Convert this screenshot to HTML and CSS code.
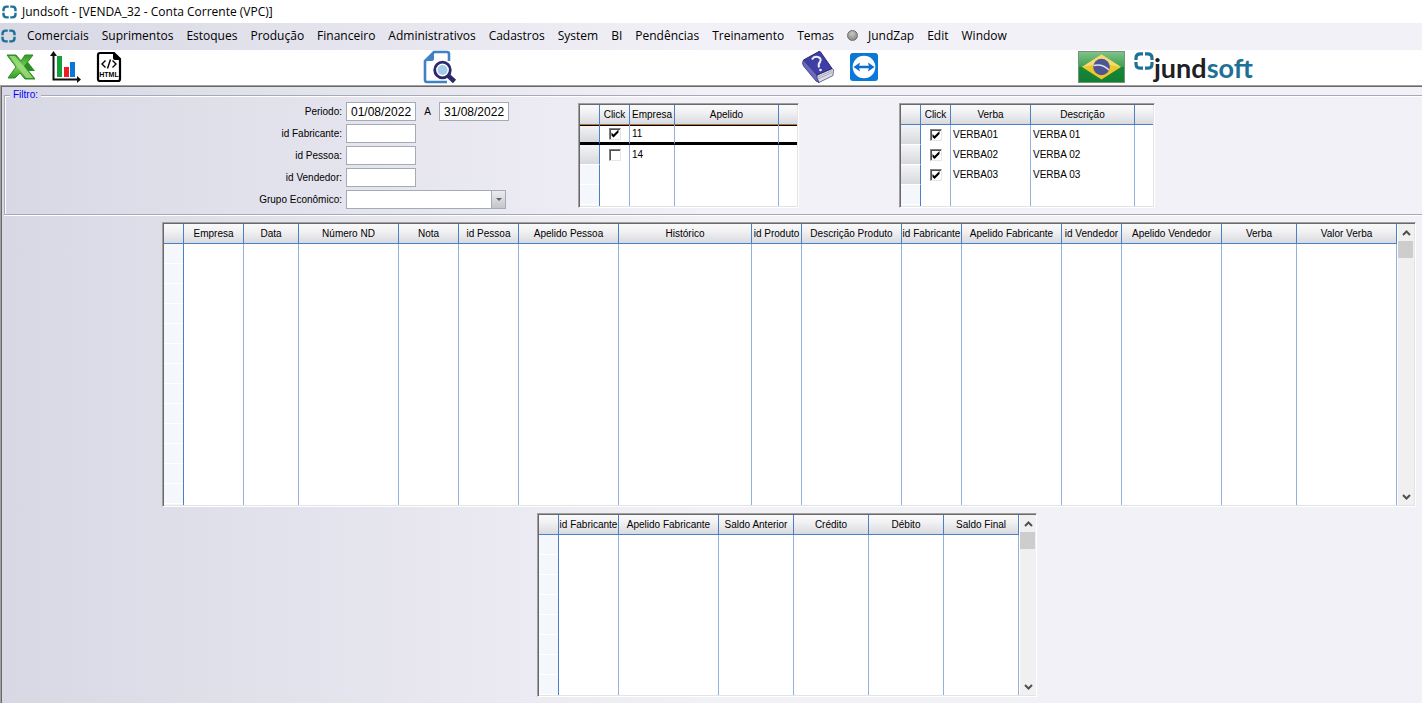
FILE: index.html
```html
<!DOCTYPE html>
<html lang="pt-BR">
<head>
<meta charset="utf-8">
<title>Jundsoft - [VENDA_32 - Conta Corrente (VPC)]</title>
<link rel="stylesheet" href="styles.css">
</head>
<body>
<svg class="defs" aria-hidden="true">
  <symbol id="mark" viewBox="0 0 20 18">
    <path d="M9 1.800H6.500C3.500 1.800 2 3.200 2 6v2M11 1.800h2.500C16.500 1.800 18 3.200 18 6v2M9 16.200H6.500C3.500 16.200 2 14.800 2 12v-2M11 16.200h2.500c3 0 4.500-1.400 4.500-4.200v-2" fill="none" stroke="#1d7196" stroke-width="3.200"/>
  </symbol>
</svg>

<header class="titlebar">
  <svg class="app-icon"><use href="#mark"/></svg>
  <h1 class="title">Jundsoft - [VENDA_32 - Conta Corrente (VPC)]</h1>
</header>

<nav class="menubar">
  <svg class="app-icon"><use href="#mark"/></svg>
  <button class="menu">Comerciais</button>
  <button class="menu">Suprimentos</button>
  <button class="menu">Estoques</button>
  <button class="menu">Produção</button>
  <button class="menu">Financeiro</button>
  <button class="menu">Administrativos</button>
  <button class="menu">Cadastros</button>
  <button class="menu">System</button>
  <button class="menu">BI</button>
  <button class="menu">Pendências</button>
  <button class="menu">Treinamento</button>
  <button class="menu">Temas</button>
  <button class="menu menu-zap"><span class="led"></span>JundZap</button>
  <button class="menu">Edit</button>
  <button class="menu">Window</button>
</nav>

<div class="toolbar">
  <div class="tools tools-export">
    <button class="tool" aria-label="Excel">
      <svg width="30" height="28" viewBox="0 0 30 28">
        <defs><linearGradient id="xg" x1="0" y1="0" x2="0" y2="1"><stop offset="0" stop-color="#2f9a26"/><stop offset=".5" stop-color="#78cf57"/><stop offset="1" stop-color="#2f9722"/></linearGradient></defs>
        <path d="M17 13l5-4 7 9h-9z" fill="#2c8f25"/>
        <path d="M1 2h9l5 6 4-6h8l-8.500 11L29 26H19l-5-6-5 5H2l8-11z" fill="url(#xg)" stroke="#2d8b22" stroke-width="1"/>
        <path d="M3 3h6l18 22h-7z" fill="#a5df82" opacity=".8"/>
      </svg>
    </button>
    <button class="tool" aria-label="Gráfico">
      <svg width="32" height="32" viewBox="0 0 32 32">
        <path d="M3.500 3v25.500H29" fill="none" stroke="#111" stroke-width="2"/>
        <path d="M0 5l3.500-5L7 5zM27 25l4 3.500-4 3.500z" fill="#111"/>
        <path d="M7 5h5v21H7z" fill="#12a038"/><path d="M14 16h5v10h-5z" fill="#ee1c24"/><path d="M20 11h5v15h-5z" fill="#0878d8"/>
      </svg>
    </button>
    <button class="tool" aria-label="HTML">
      <svg width="26" height="32" viewBox="0 0 26 32">
        <path d="M4 2h14l6 6v20q0 2-2 2H4q-2 0-2-2V4q0-2 2-2z" fill="#fff" stroke="#000" stroke-width="2.200"/>
        <path d="M17 1l8 8h-6q-2 0-2-2z"/>
        <path d="M9.500 9.500L6 13l3.500 3.500M16.500 9.500L20 13l-3.500 3.500M14.500 8.500l-3 9" fill="none" stroke="#000" stroke-width="1.400"/>
        <text x="13" y="26" class="html-tag" text-anchor="middle">HTML</text>
      </svg>
    </button>
  </div>
  <button class="tool tool-search" aria-label="Visualizar">
    <svg width="34" height="34" viewBox="0 0 34 34">
      <path d="M26 11V4q0-2-2-2H11L2 11v19q0 2 2 2h20" fill="none" stroke="#3f83c5" stroke-width="2.600"/>
      <path d="M11 1.500V9q0 2-2 2H1z" fill="#3f83c5"/>
      <circle cx="19.500" cy="20" r="7.800" fill="#fff" stroke="#29296b" stroke-width="2.800"/>
      <circle cx="19.500" cy="20" r="5" fill="#a6cbea"/>
      <path d="M25 25.500l6.500 6" stroke="#29296b" stroke-width="4.600"/>
    </svg>
  </button>
  <div class="tools tools-help">
    <button class="tool" aria-label="Ajuda">
      <svg width="34" height="34" viewBox="0 0 34 34">
        <path d="M15 25l15-6.500 1.500 1-.5 6L17 32.500l-3-2z" fill="#dddde8" stroke="#4b4b76" stroke-width=".8"/>
        <path d="M16 29l14-6.500M16 27l14-6.500" stroke="#9999ae" stroke-width=".8"/>
        <path d="M1.500 10L17 1.500q1-.5 1.500.5L30 18.500 15 25z" fill="#3e3ea5" stroke="#292975"/>
        <path d="M1.500 10q-2 3 0 6L14 31l3 1.500-2-4.500v-3z" fill="#6969bd" stroke="#33337e" stroke-width=".8"/>
        <path d="M10 9.500q2-3.800 6-2.500 4 1.500 2 5-2 2-1 5.500" fill="none" stroke="#eef" stroke-width="2"/>
        <circle cx="18.500" cy="20" r="1.300" fill="#eef"/>
      </svg>
    </button>
    <button class="tool" aria-label="TeamViewer">
      <svg width="28" height="28" viewBox="0 0 28 28">
        <rect width="28" height="28" rx="3" fill="#0b78d8"/>
        <circle cx="14" cy="14" r="11.300" fill="#fff"/>
        <path d="M3.500 14l6.500-4.500-.8 3.200h9.600L18 9.500l6.500 4.500-6.500 4.500.8-3.200H9.200l.8 3.200z" fill="#0b6fce"/>
      </svg>
    </button>
  </div>
  <div class="brand">
    <svg width="48" height="34" viewBox="0 0 48 34">
      <defs>
        <linearGradient id="fg" x1="0" y1="0" x2="0" y2="1"><stop offset="0" stop-color="#83c38b"/><stop offset=".5" stop-color="#3d9f50"/><stop offset=".5" stop-color="#17883a"/><stop offset="1" stop-color="#127d30"/></linearGradient>
      </defs>
      <rect x=".5" y="1.500" width="46" height="31" fill="url(#fg)" stroke="#77947b"/>
      <path d="M4 17L23.500 4.500 43 17 23.500 29.500z" fill="#edc72c"/>
      <path d="M4 17L23.500 4.500 43 17q-20-5-39 0z" fill="#f3dc73"/>
      <circle cx="23.500" cy="17" r="8.300" fill="#4f5594"/>
      <path d="M15.500 15.500q9-2 15.500 4.500" fill="none" stroke="#dce3ee" stroke-width="1.600"/>
    </svg>
    <div class="logo">
      <svg class="logo-mark"><use href="#mark"/></svg>
      <span class="logo-name">jund<span class="logo-soft">soft</span></span>
    </div>
  </div>
</div>

<main class="workspace">
  <fieldset class="filter">
    <legend class="filter-title">Filtro:</legend>
    <div class="filter-body">
      <form class="form">
        <label for="de">Periodo:</label>
        <div class="period">
          <input class="field" id="de" value="01/08/2022">
          <label for="ate">A</label>
          <input class="field" id="ate" value="31/08/2022">
        </div>
        <label for="fab">id Fabricante:</label><input class="field" id="fab">
        <label for="pes">id Pessoa:</label><input class="field" id="pes">
        <label for="ven">id Vendedor:</label><input class="field" id="ven">
        <label for="grp">Grupo Econômico:</label>
        <div class="combo">
          <select class="field field-combo" id="grp"><option></option></select>
          <span class="combo-arrow"></span>
        </div>
      </form>

      <div class="frame frame-small frame-empresa">
        <table class="grid">
          <colgroup><col class="w20"><col class="w30"><col class="w45"><col class="w104"><col></colgroup>
          <thead><tr><th></th><th>Click</th><th>Empresa</th><th>Apelido</th><th></th></tr></thead>
          <tbody>
            <tr class="current"><td class="handle"></td><td class="tick"><input type="checkbox" class="check" aria-label="Empresa 11" checked></td><td>11</td><td></td><td></td></tr>
            <tr><td class="handle"></td><td class="tick"><input type="checkbox" class="check" aria-label="Empresa 14"></td><td>14</td><td></td><td></td></tr>
            <tr class="rest"><td></td><td></td><td></td><td></td><td></td></tr>
          </tbody>
        </table>
      </div>

      <div class="frame frame-small frame-verba">
        <table class="grid">
          <colgroup><col class="w20"><col class="w30"><col class="w80"><col class="w104"><col></colgroup>
          <thead><tr><th></th><th>Click</th><th>Verba</th><th>Descrição</th><th></th></tr></thead>
          <tbody>
            <tr><td class="handle"></td><td class="tick"><input type="checkbox" class="check" aria-label="VERBA 01" checked></td><td>VERBA01</td><td>VERBA 01</td><td></td></tr>
            <tr><td class="handle"></td><td class="tick"><input type="checkbox" class="check" aria-label="VERBA 02" checked></td><td>VERBA02</td><td>VERBA 02</td><td></td></tr>
            <tr><td class="handle"></td><td class="tick"><input type="checkbox" class="check" aria-label="VERBA 03" checked></td><td>VERBA03</td><td>VERBA 03</td><td></td></tr>
            <tr class="rest"><td></td><td></td><td></td><td></td><td></td></tr>
          </tbody>
        </table>
      </div>
    </div>
  </fieldset>

  <section class="frame frame-entries">
    <table class="grid">
      <colgroup><col class="w20"><col class="w60"><col class="w55"><col class="w100"><col class="w60"><col class="w60"><col class="w100"><col><col class="w50"><col class="w100"><col class="w60"><col class="w100"><col class="w60"><col class="w100"><col class="w75"><col class="w100"></colgroup>
      <thead><tr><th></th><th>Empresa</th><th>Data</th><th>Número ND</th><th>Nota</th><th>id Pessoa</th><th>Apelido Pessoa</th><th>Histórico</th><th>id Produto</th><th>Descrição Produto</th><th>id Fabricante</th><th>Apelido Fabricante</th><th>id Vendedor</th><th>Apelido Vendedor</th><th>Verba</th><th>Valor Verba</th></tr></thead>
      <tbody><tr class="rest"><td></td><td></td><td></td><td></td><td></td><td></td><td></td><td></td><td></td><td></td><td></td><td></td><td></td><td></td><td></td><td></td></tr></tbody>
    </table>
    <div class="scroll">
      <button class="scroll-btn" aria-label="Subir"><svg width="9" height="6" viewBox="0 0 9 6"><path d="M1 5l3.500-3.500L8 5" fill="none" stroke="#505050" stroke-width="2"/></svg></button>
      <div class="thumb"></div>
      <button class="scroll-btn scroll-down" aria-label="Descer"><svg width="9" height="6" viewBox="0 0 9 6"><path d="M1 1l3.500 3.500L8 1" fill="none" stroke="#505050" stroke-width="2"/></svg></button>
    </div>
  </section>

  <section class="frame frame-totals">
    <table class="grid">
      <colgroup><col class="w20"><col class="w60"><col class="w100"><col class="w75"><col class="w75"><col class="w75"><col class="w75"></colgroup>
      <thead><tr><th></th><th>id Fabricante</th><th>Apelido Fabricante</th><th>Saldo Anterior</th><th>Crédito</th><th>Débito</th><th>Saldo Final</th></tr></thead>
      <tbody><tr class="rest"><td></td><td></td><td></td><td></td><td></td><td></td><td></td></tr></tbody>
    </table>
    <div class="scroll">
      <button class="scroll-btn" aria-label="Subir"><svg width="9" height="6" viewBox="0 0 9 6"><path d="M1 5l3.500-3.500L8 5" fill="none" stroke="#505050" stroke-width="2"/></svg></button>
      <div class="thumb"></div>
      <button class="scroll-btn scroll-down" aria-label="Descer"><svg width="9" height="6" viewBox="0 0 9 6"><path d="M1 1l3.500 3.500L8 1" fill="none" stroke="#505050" stroke-width="2"/></svg></button>
    </div>
  </section>
</main>
</body>
</html>
```
FILE: styles.css
```css
* { box-sizing: border-box; }

:root {
  --ui: "Open Sans", "Noto Sans", sans-serif;
  --small: "Liberation Sans", Arial, sans-serif;
  --chrome: linear-gradient(90deg, #d8d8e5 0, #f2f1f7 50%);
  --line: #4a80c8;
  --line-soft: #93b1da;
}

body {
  margin: 0;
  min-height: 100vh;
  display: flex;
  flex-direction: column;
  background: #fff;
  color: #000;
  font: 12px/16px var(--ui);
  overflow: hidden;
}

button { margin: 0; padding: 0; border: 0; background: none; font: inherit; color: inherit; }
svg { display: block; }
.defs { position: absolute; width: 0; height: 0; }

.titlebar { display: flex; align-items: center; gap: 5px; height: 23px; padding-left: 2px; }
.title { margin: 0; font-size: 12px; font-weight: 400; }
.app-icon { width: 15px; height: 14px; flex: none; }

.menubar { display: flex; align-items: center; height: 27px; padding-bottom: 2px; background: var(--chrome); }
.menubar .app-icon { margin: 0 11px 0 1px; }
.menu { margin-right: 13px; white-space: nowrap; }
.menu-zap { display: flex; align-items: center; gap: 10px; }
.led { width: 11px; height: 11px; border: 1px solid #6c6c6c; border-radius: 50%; background: radial-gradient(circle at 45% 30%, #c9c9c9, #777); }

.toolbar { display: flex; align-items: center; height: 35px; padding-bottom: 2px; }
.tools { display: flex; align-items: center; }
.tools-export { gap: 14px; padding-left: 6px; }
.tool-search { margin-left: 301px; }
.tools-help { gap: 14px; margin-left: 345px; }
.brand { display: flex; align-items: center; gap: 8px; margin-left: 200px; }
.html-tag { font: 700 7px "Liberation Sans", sans-serif; }
.logo { display: flex; align-items: flex-start; height: 30px; }
.logo-mark { width: 20px; height: 18px; }
.logo-name { font: 700 27px/32px Lato, sans-serif; color: #202024; }
.logo-soft { color: #1d7196; }

.workspace {
  flex: 1;
  border-top: 1px solid #a0a0a0;
  border-left: 1px solid #a0a0a0;
  box-shadow: inset 1px 1px 0 #696969;
  background: var(--chrome);
  padding: 3px 0 6px 3px;
  font: 10px/14px var(--small);
}

.filter {
  margin: 0;
  min-width: 0;
  padding: 0;
  border: 1px solid #a3acb6;
  border-right: 0;
  box-shadow: inset 1px 1px 0 #fff, 0 1px 0 #fff;
}
.filter-title { margin-left: 5px; padding: 0 3px; line-height: 12px; color: #00f; background: #d9d9e5; }
.filter-body { display: flex; align-items: flex-start; padding: 1px 0 5px; }

.form { display: grid; grid-template-columns: 337px auto; column-gap: 4px; row-gap: 3px; align-items: center; }
.form label { text-align: right; }
.period { display: flex; align-items: center; }
.form .period label { width: 23px; text-align: center; }
.field { display: block; width: 70px; height: 19px; margin: 0; padding: 0 4px; border: 1px solid #a3acb6; border-radius: 0; background: #fff; font: 12px/16px var(--small); color: #000; }
.combo { position: relative; width: 160px; }
.field-combo { width: 160px; appearance: none; }
.combo-arrow {
  position: absolute; top: 0; right: 0; width: 15px; height: 19px;
  border: 1px solid #a3acb6; background: linear-gradient(#ececef, #c3c5ca);
  pointer-events: none;
}
.combo-arrow::after { content: ""; position: absolute; left: 4px; top: 7px; border: 3px solid transparent; border-top-color: #5f6368; border-bottom: 0; }

.frame {
  display: flex;
  border: 1px solid;
  border-color: #a0a0a0 #fff #fff #a0a0a0;
  box-shadow: inset 1px 1px 0 #696969, inset -1px -1px 0 #e3e3e3;
  padding: 1px;
  background: #fff;
}
.frame-small { height: 105px; margin-top: 1px; }
.frame-empresa { width: 221px; margin-left: 69px; }
.frame-verba { width: 256px; margin-left: 100px; }
.frame-entries { height: 285px; margin: 7px 6px 0 158px; }
.frame-totals { width: 500px; height: 184px; margin: 6px 0 0 533px; }

.grid { flex: 1; width: 100%; height: 100%; table-layout: fixed; border-collapse: separate; border-spacing: 0; }
.grid th {
  height: 20px; padding: 0; font-weight: 400; text-align: center; white-space: nowrap; line-height: 14px;
  background: linear-gradient(#fafafb, #f1f1f3 40%, #d8dadf);
  border-right: 1px solid var(--line); border-bottom: 1px solid var(--line);
}
.grid td { height: 20px; padding: 0 2px; border-right: 1px solid var(--line-soft); white-space: nowrap; }
.grid td:first-child { border-right-color: var(--line); }
.frame-small .grid th:last-child, .frame-small .grid td:last-child { border-right: 0; }
.grid .handle { background: linear-gradient(#f5f5f6, #d6d8dd); border-bottom: 1px solid #fff; }
.grid .tick { padding: 0; }
.grid .rest td { height: auto; }
.grid .rest td:first-child { background: repeating-linear-gradient(#f4f8fd 0 19px, #fff 19px 20px); }
.grid .current td { border-bottom: 3px solid #000; }
.frame-empresa .grid th { border-bottom-color: #b8752f; }
.frame-empresa .current td { box-shadow: inset 0 1px 0 #000; }

.check {
  appearance: none; display: block; width: 12px; height: 12px; margin: 0 auto;
  border: 1px solid; border-color: #808080 #e6e6e6 #e6e6e6 #808080;
  box-shadow: inset 1px 1px 0 #505050; background: #fff;
}
.check:checked::before {
  content: ""; display: block; width: 10px; height: 10px; background: #000;
  clip-path: polygon(20% 40%, 40% 60%, 90% 10%, 90% 40%, 40% 90%, 20% 70%);
}

.w20 { width: 20px; } .w30 { width: 30px; } .w45 { width: 45px; } .w50 { width: 50px; }
.w55 { width: 55px; } .w60 { width: 60px; } .w75 { width: 75px; } .w80 { width: 80px; }
.w100 { width: 100px; } .w104 { width: 104px; }

.scroll { flex: none; display: flex; flex-direction: column; width: 17px; background: #f0f0f0; border-left: 1px solid #fff; }
.scroll-btn { display: grid; place-items: center; height: 17px; }
.scroll-down { margin-top: auto; }
.thumb { height: 17px; margin-right: 1px; background: #cdcdcd; }
```
